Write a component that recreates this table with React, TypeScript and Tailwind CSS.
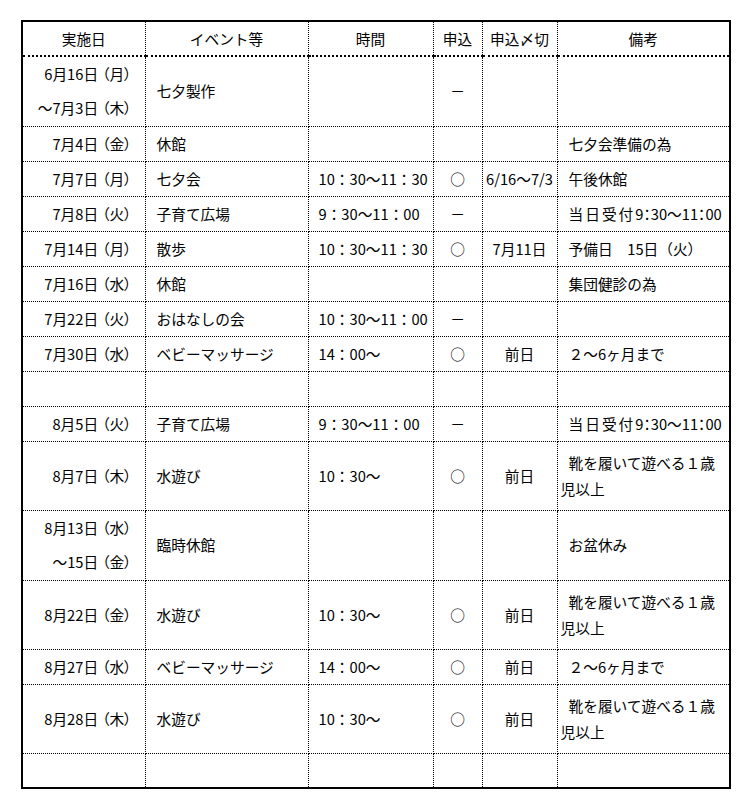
import React from "react";

type Row = {
  d: string[];
  e?: string;
  t?: string;
  m?: string;
  c?: string;
  n?: React.ReactNode | string[];
  h?: number;
};

const Uketsuke = () => (
  <>
    <span className="tracking-[2px]">当日受付</span>
    <span className="[font-feature-settings:'palt']">9：30～11：00</span>
  </>
);

const rows: Row[] = [
  { d: ["6月16日（月）", "～7月3日（木）"], e: "七夕製作", m: "－", h: 70 },
  { d: ["7月4日（金）"], e: "休館", n: "七夕会準備の為" },
  { d: ["7月7日（月）"], e: "七夕会", t: "10：30～11：30", m: "○", c: "6/16～7/3", n: "午後休館" },
  { d: ["7月8日（火）"], e: "子育て広場", t: "9：30～11：00", m: "－", n: <Uketsuke /> },
  { d: ["7月14日（月）"], e: "散歩", t: "10：30～11：30", m: "○", c: "7月11日", n: "予備日　15日（火）" },
  { d: ["7月16日（水）"], e: "休館", n: "集団健診の為" },
  { d: ["7月22日（火）"], e: "おはなしの会", t: "10：30～11：00", m: "－" },
  { d: ["7月30日（水）"], e: "ベビーマッサージ", t: "14：00～", m: "○", c: "前日", n: "２～6ヶ月まで" },
  { d: [] },
  { d: ["8月5日（火）"], e: "子育て広場", t: "9：30～11：00", m: "－", n: <Uketsuke /> },
  { d: ["8月7日（木）"], e: "水遊び", t: "10：30～", m: "○", c: "前日", n: ["靴を履いて遊べる１歳", "児以上"], h: 69 },
  { d: ["8月13日（水）", "～15日（金）"], e: "臨時休館", n: "お盆休み", h: 70 },
  { d: ["8月22日（金）"], e: "水遊び", t: "10：30～", m: "○", c: "前日", n: ["靴を履いて遊べる１歳", "児以上"], h: 69 },
  { d: ["8月27日（水）"], e: "ベビーマッサージ", t: "14：00～", m: "○", c: "前日", n: "２～6ヶ月まで" },
  { d: ["8月28日（木）"], e: "水遊び", t: "10：30～", m: "○", c: "前日", n: ["靴を履いて遊べる１歳", "児以上"], h: 69 },
  { d: [] },
];

const cell = "border border-dotted border-black p-0 align-middle font-normal";
const head = `${cell} border-b-2 border-b-solid text-center leading-[33px] whitespace-nowrap`;

function DateLine({ text }: { text: string }) {
  const idx = text.indexOf("（");
  if (idx < 0) return <div>{text}</div>;
  return (
    <div>
      {text.slice(0, idx)}
      <span className="ml-[4px]">{text.slice(idx)}</span>
    </div>
  );
}

export default function App() {
  return (
    <div
      className="bg-white w-[743px] h-[804px] pt-[20px] pl-[21px] text-black text-[14.7px]"
      style={{ fontFamily: '"Noto Sans CJK JP", "Noto Sans", sans-serif' }}
    >
      <table className="table-fixed border-collapse border-2 border-solid border-black w-[708px]">
        <colgroup>
          <col className="w-[123px]" />
          <col className="w-[163px]" />
          <col className="w-[125px]" />
          <col className="w-[49px]" />
          <col className="w-[75px]" />
          <col className="w-[173px]" />
        </colgroup>
        <thead>
          <tr className="h-[35px]">
            <th className={head}>実施日</th>
            <th className={head}>イベント等</th>
            <th className={head}>時間</th>
            <th className={head}>申込</th>
            <th className={head}>申込〆切</th>
            <th className={head}>備考</th>
          </tr>
        </thead>
        <tbody>
          {rows.map((r, i) => (
            <tr key={i} style={{ height: `${r.h ?? 35}px` }}>
              <td
                className={`${cell} text-right pr-[13px] leading-[34px] whitespace-nowrap [font-feature-settings:'palt']`}
              >
                {r.d.map((l, j) => (
                  <DateLine key={j} text={l} />
                ))}
              </td>
              <td className={`${cell} pl-[11px] leading-[34px] whitespace-nowrap`}>{r.e}</td>
              <td className={`${cell} pl-[10px] leading-[34px] whitespace-nowrap`}>{r.t}</td>
              <td className={`${cell} text-center leading-[34px]`}>{r.m}</td>
              <td className={`${cell} text-center leading-[34px] whitespace-nowrap`}>{r.c}</td>
              <td className={`${cell} pl-[3px] leading-[34px] whitespace-nowrap`}>
                {Array.isArray(r.n) ? (
                  <div className="leading-[26px]">
                    <div className="pl-[8px]">{r.n[0]}</div>
                    <div>{r.n[1]}</div>
                  </div>
                ) : (
                  <div className="pl-[8px]">{r.n}</div>
                )}
              </td>
            </tr>
          ))}
        </tbody>
      </table>
    </div>
  );
}
